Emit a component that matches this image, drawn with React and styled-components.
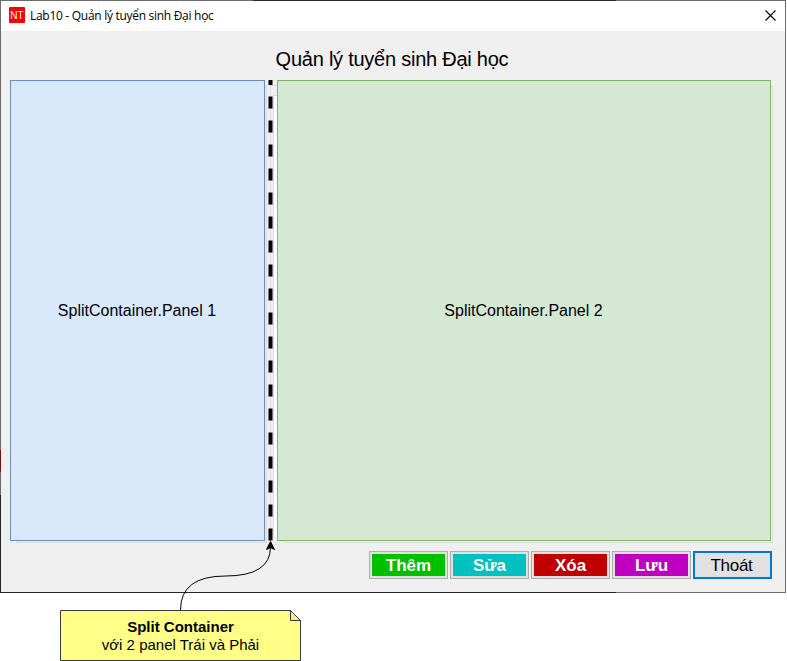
import React from "react";
import styled, { createGlobalStyle } from "styled-components";

const GlobalStyle = createGlobalStyle`
  * { box-sizing: border-box; }
  body { margin: 0; background: #fff; overflow: hidden; font-family: "Liberation Sans", Arial, sans-serif; color: #000; }
`;

const Page = styled.main`
  position: relative;
  isolation: isolate;
  width: 787px;
  height: 661px;
`;

const Window = styled.section`
  width: 786px;
  height: 593px;
  display: flex;
  flex-direction: column;
  padding: 1px;
  background:
    linear-gradient(90deg, #6b6b6b 253px, #2a2628 253px 616px, #6b6b6b 616px) 0 0 / 100% 1px no-repeat,
    linear-gradient(90deg, #242424 616px, #6b6b6b 616px) 0 100% / 100% 1px no-repeat,
    linear-gradient(#6b6b6b 450px, #6e1414 450px 472px, #6b6b6b 472px 495px, #242424 495px) 0 0 / 1px 100% no-repeat,
    linear-gradient(#6b6b6b, #6b6b6b) 100% 0 / 1px 100% no-repeat,
    #efefef;
`;

const TitleBar = styled.header`
  height: 30px;
  flex: none;
  display: flex;
  align-items: center;
  padding: 0 9px 0 8px;
  background: #fff;
`;

const AppIcon = styled.span`
  width: 16px;
  height: 16px;
  margin: -2px 5px 0 0;
  border-radius: 1px;
  background: #fe0000;
  color: #fff;
  font-size: 10px;
  line-height: 17px;
  text-align: center;
`;

const WindowTitle = styled.span`
  flex: 1;
  font: 12px/16px "Segoe UI", "Open Sans", sans-serif;
  letter-spacing: -0.29px;
  white-space: nowrap;
`;

const CloseIcon = styled.svg`
  width: 11px;
  height: 11px;
  display: block;
  margin-top: -2px;
`;

const Heading = styled.h1`
  height: 49px;
  flex: none;
  margin: 0;
  padding: 16px 2px 0 0;
  font-size: 20px;
  font-weight: 400;
  line-height: 24px;
  letter-spacing: -0.24px;
  text-align: center;
`;

const SplitContainer = styled.div`
  height: 461px;
  flex: none;
  display: grid;
  grid-template-columns: 255px 12px 494px;
  margin-left: 9px;
`;

const Panel = styled.div`
  display: flex;
  align-items: center;
  justify-content: center;
  padding-right: 1px;
  background: ${(p) => p.$fill};
  border: 1px solid ${(p) => p.$edge};
  box-shadow: 4px 4px 0 -3px #efefef, 4px 4px 0 -2px #dcdcdc;
  font-size: 16px;
`;

const Splitter = styled.svg`
  width: 12px;
  height: 461px;
  display: block;
`;

const Actions = styled.footer`
  display: flex;
  justify-content: flex-end;
  gap: 2px;
  padding: 10px 13px 0 0;
`;

const ActionButton = styled.button`
  width: 79px;
  height: 28px;
  padding: 1px 0 0 0;
  border: 1px solid #adadad;
  outline: 0;
  background: ${(p) => p.$color};
  box-shadow: inset 0 0 0 2px #e1e1e1;
  color: #fff;
  font: bold 17px/25px "Liberation Sans", Arial, sans-serif;
`;

const ExitButton = styled(ActionButton)`
  padding-right: 2px;
  border: 2px solid #0078d7;
  box-shadow: none;
  color: #000;
  font-weight: 400;
  line-height: 23px;
  letter-spacing: -0.3px;
`;

const Connector = styled.svg`
  position: absolute;
  left: 170px;
  top: 536px;
  width: 120px;
  height: 80px;
`;

const Note = styled.aside`
  position: absolute;
  left: 60px;
  top: 610px;
  width: 241px;
  height: 51px;
  padding-top: 8px;
  text-align: center;
  font-size: 15px;
  line-height: 18px;
`;

const NoteShape = styled.svg`
  position: absolute;
  inset: 0;
  z-index: -1;
`;

const dashes = Array.from({ length: 19 }, (_, i) => 16 + i * 24);

const buttons = [
  ["Thêm", "#00c000"],
  ["Sửa", "#00c0c0"],
  ["Xóa", "#c00000"],
  ["Lưu", "#c000c0"],
];

export default function App() {
  return (
    <Page>
      <GlobalStyle />
      <Window>
        <TitleBar>
          <AppIcon>NT</AppIcon>
          <WindowTitle>Lab10 - Quản lý tuyển sinh Đại học</WindowTitle>
          <CloseIcon viewBox="0 0 11 11">
            <path d="M.5 .5l10 10M10.5 .5l-10 10" stroke="#000" strokeWidth="1.1" />
          </CloseIcon>
        </TitleBar>
        <Heading>Quản lý tuyển sinh Đại học</Heading>
        <SplitContainer>
          <Panel $fill="#dae8fc" $edge="#6c8ebf">SplitContainer.Panel 1</Panel>
          <Splitter viewBox="0 0 12 461">
            <rect x="9" y="15" width="3" height="443" fill="#fff" />
            <path d="M5.5 5V461M8.5 15V458M5 5.5H12M8 15.5H12" stroke="#dcdcdc" fill="none" />
            <rect x="3.5" width="4" height="5" />
            {dashes.map((y) => <rect key={y} x="3.5" y={y + 0.5} width="4" height="12" />)}
          </Splitter>
          <Panel $fill="#d5e8d4" $edge="#82b366">SplitContainer.Panel 2</Panel>
        </SplitContainer>
        <Actions>
          {buttons.map(([label, color]) => <ActionButton key={label} $color={color}>{label}</ActionButton>)}
          <ExitButton $color="#e1e1e1">Thoát</ExitButton>
        </Actions>
      </Window>
      <Connector viewBox="170 536 120 80">
        <path d="M180.5 610Q180.5 576 225.500 576Q270.500 576 270.500 547" fill="none" stroke="#000" />
        <path d="M270.500 541.500L274.500 549.500L270.500 547.500L266.500 549.500Z" stroke="#000" />
      </Connector>
      <Note>
        <NoteShape width="241" height="51" viewBox="0 0 241 51">
          <path d="M.5 .5H230.500L240.500 10.500V50.500H.5Z" fill="#ffff88" stroke="#36393d" />
          <path d="M230.500 .5V10.500H240.500Z" fill="#f2f281" stroke="#36393d" />
        </NoteShape>
        <b>Split Container</b>
        <br />
        với 2 panel Trái và Phải
      </Note>
    </Page>
  );
}
